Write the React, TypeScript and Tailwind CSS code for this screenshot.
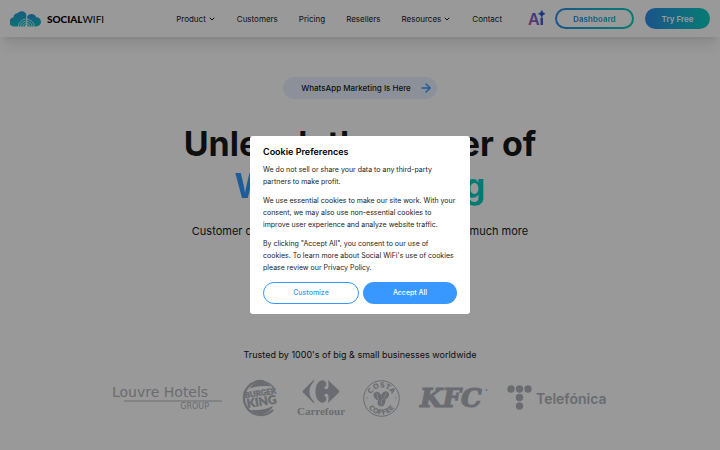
import React from "react";
import { ArrowRight, ChevronDown } from "lucide-react";

const LOGO = "#b1b5bc";

function SocialWifiLogo() {
  return (
    <a href="#" aria-label="Social WiFi" className="flex items-center gap-1.5">
      <svg width="31" height="17" viewBox="0 0 31 17" aria-hidden="true">
        <defs>
          <linearGradient id="cloud" x1="0" y1="0" x2="0.3" y2="1">
            <stop offset="0" stopColor="#2f8fd6" />
            <stop offset="1" stopColor="#12bfc4" />
          </linearGradient>
        </defs>
        <path
          d="M4.500 16.500A4.600 4.600 0 0 1 3.600 7.200A4.300 4.300 0 0 1 7.500 3.200A5.200 5.200 0 0 1 16.300 4.300L16.300 16.500Z"
          fill="url(#cloud)"
        />
        <path
          d="M17.300 16.500V6A5.200 5.200 0 0 1 26.300 7.300A4.600 4.600 0 0 1 26.500 16.500Z"
          fill="url(#cloud)"
        />
        <g fill="none" stroke="#ffffff" strokeWidth="0.7">
          <path d="M8.300 17a8 8 0 0 1 16 0" />
          <path d="M10.500 17a5.800 5.800 0 0 1 11.600 0" />
          <path d="M12.700 17a3.600 3.600 0 0 1 7.200 0" />
        </g>
        <circle cx="16.300" cy="16" r="1.200" fill="#ffffff" />
      </svg>
      <span className="font-['Lato',sans-serif] text-[10px] leading-4 text-black">
        <span className="font-black">SOCIAL</span>
        <span className="font-normal">WIFI</span>
      </span>
    </a>
  );
}

function AiMark() {
  return (
    <svg width="19" height="18" viewBox="0 0 19 18" role="img" aria-label="Ai" className="overflow-visible">
      <defs>
        <linearGradient id="ai" x1="0" y1="1" x2="1" y2="0">
          <stop offset="0" stopColor="#d9538f" />
          <stop offset="0.55" stopColor="#7d5fd0" />
          <stop offset="1" stopColor="#2459d6" />
        </linearGradient>
      </defs>
      <text x="1" y="15" fontFamily="Inter, sans-serif" fontSize="16" fontWeight="600" fill="url(#ai)">
        A
      </text>
      <rect x="13.500" y="7.500" width="2.500" height="7.500" rx="0.5" fill="#4a5cd0" />
      <path
        d="M14.800 0.500Q15.300 3 18 3.700Q15.300 4.400 14.800 7Q14.300 4.400 11.500 3.700Q14.300 3 14.800 0.500Z"
        fill="#1d56c9"
        stroke="#1d56c9"
        strokeWidth="0.6"
      />
    </svg>
  );
}

function LouvreHotels() {
  return (
    <svg width="111" height="28" viewBox="0 0 111 28" role="img" aria-label="Louvre Hotels Group">
      <g fill={LOGO} fontFamily="'DejaVu Sans', sans-serif">
        <text x="0" y="13" fontSize="14">Louvre Hotels</text>
        <text x="97" y="25" fontSize="8" textAnchor="end">GROUP</text>
      </g>
      <path d="M12 17h98" stroke={LOGO} strokeWidth="1" />
    </svg>
  );
}

function BurgerKing() {
  return (
    <svg width="37" height="38" viewBox="0 0 37 38" role="img" aria-label="Burger King">
      <path d="M8 9.500C11 1.500 23 0 29 7.500C22 6.500 14 7 8 9.500Z" fill={LOGO} />
      <path d="M9 31C15 31.500 24 30.500 31 27C27 36 15 38 9 31Z" fill={LOGO} />
      <path d="M22 2.300A17 17 0 1 0 31 31" fill="none" stroke={LOGO} strokeWidth="2.200" />
      <path d="M22 2.300A17 17 0 0 1 33 11" fill="none" stroke={LOGO} strokeWidth="1.200" />
      <g
        transform="rotate(-9 18 19)"
        fill={LOGO}
        stroke={LOGO}
        strokeWidth="0.4"
        fontFamily="'Lato', sans-serif"
        fontWeight="900"
        textAnchor="middle"
      >
        <text x="19" y="17" fontSize="8">BURGER</text>
        <text x="19" y="27" fontSize="12">KING</text>
      </g>
    </svg>
  );
}

function Carrefour() {
  return (
    <svg width="46" height="38" viewBox="0 0 46 38" role="img" aria-label="Carrefour" className="overflow-visible">
      <g fill={LOGO}>
        <path d="M15.500 1L5 11.500Q4.300 12.500 5 13.500L15.500 24C16.500 24 16.500 23 15.500 22C12 18 11.500 15 11.500 12.500S12 7 15.500 3C16.500 2 16.500 1 15.500 1Z" />
        <path d="M23 1.500C27 .5 29 4 28 6.500C27.500 8 26 8.500 26 8.500C27 10.500 29 10.500 30 9.500C31 8 30.500 4 30 1L41 11.500Q41.700 12.500 41 13.500L30 24C30.500 21 31 17 30 15.500C29 14.500 27 14.500 26 16.500C26 16.500 27.500 17 28 18.500C29 21 27 24.500 23 23.500C19.500 22 17.500 18 17.500 12.500S19.500 3 23 1.500Z" />
        <text x="23" y="36" textAnchor="middle" fontFamily="'Liberation Serif', serif" fontSize="11" fontWeight="700">
          Carrefour
        </text>
      </g>
    </svg>
  );
}

function CostaCoffee() {
  return (
    <svg width="37" height="37" viewBox="0 0 37 37" role="img" aria-label="Costa Coffee">
      <defs>
        <path id="costa-top" d="M7.500 18.500a11 11 0 0 1 22 0" />
        <path id="costa-bottom" d="M2.500 18.500a16 16 0 0 0 32 0" />
      </defs>
      <circle cx="18.500" cy="18.500" r="17.800" fill="none" stroke={LOGO} strokeWidth="1" />
      <g
        fill={LOGO}
        fontFamily="'DejaVu Sans', sans-serif"
        fontSize="7"
        fontWeight="700"
        textAnchor="middle"
      >
        <text><textPath href="#costa-top" startOffset="50%">COSTA</textPath></text>
        <text><textPath href="#costa-bottom" startOffset="50%">COFFEE</textPath></text>
      </g>
      <g fill={LOGO}>
        <ellipse cx="14.500" cy="16" rx="3.600" ry="4.600" transform="rotate(-38 14.500 16)" />
        <ellipse cx="22" cy="15.500" rx="3.600" ry="4.600" transform="rotate(35 22 15.500)" />
        <ellipse cx="18.500" cy="22" rx="3.700" ry="4.500" transform="rotate(20 18.500 22)" />
        <circle cx="4" cy="18" r="0.7" />
        <circle cx="33" cy="18" r="0.7" />
      </g>
      <g fill="none" stroke="#ffffff" strokeWidth="0.5">
        <path d="M12.500 12.500q3 2 2 4t2 3.500" />
        <path d="M24.500 12q-3 1.500-2.300 3.500t-2.200 4" />
        <path d="M20 18.500q-3 2-1.500 4t-1.500 4" />
      </g>
    </svg>
  );
}

function Kfc() {
  return (
    <svg width="69" height="22" viewBox="0 0 69 22" role="img" aria-label="KFC" className="overflow-visible">
      <text
        x="1"
        y="20"
        fontFamily="'DejaVu Serif', serif"
        fontSize="26"
        fontWeight="700"
        fontStyle="italic"
        fill={LOGO}
        stroke={LOGO}
        strokeWidth="1.200"
      >
        KFC
      </text>
      <circle cx="67.500" cy="3" r="0.9" fill={LOGO} />
    </svg>
  );
}

function Telefonica() {
  return (
    <svg width="101" height="26" viewBox="0 0 101 26" role="img" aria-label="Telefónica">
      <g fill={LOGO}>
        <circle cx="4" cy="4" r="3.700" />
        <circle cx="12.500" cy="4" r="3.700" />
        <circle cx="21" cy="4" r="3.700" />
        <circle cx="12.500" cy="12.500" r="3.700" />
        <circle cx="12.500" cy="21" r="3.700" />
        <text x="29" y="19" fontFamily="Inter, sans-serif" fontSize="14" fontWeight="600">
          Telefónica
        </text>
      </g>
    </svg>
  );
}

const NAV = [
  { label: "Product", menu: true },
  { label: "Customers", menu: false },
  { label: "Pricing", menu: false },
  { label: "Resellers", menu: false },
  { label: "Resources", menu: true },
  { label: "Contact", menu: false },
];

function Header() {
  return (
    <header className="flex h-[37px] items-center justify-between bg-white px-2.5 shadow-lg">
      <SocialWifiLogo />
      <div className="flex items-center">
        <nav aria-label="Main" className="mr-[25px] flex items-center gap-[21px] text-[8px] leading-3">
          {NAV.map((item) =>
            item.menu ? (
              <button key={item.label} type="button" className="flex items-center gap-0.5">
                {item.label}
                <ChevronDown size={8} strokeWidth={3} aria-hidden="true" />
              </button>
            ) : (
              <a key={item.label} href="#">
                {item.label}
              </a>
            ),
          )}
        </nav>
        <AiMark />
        <button
          type="button"
          className="ml-[9px] h-[21px] w-[79px] rounded-full bg-linear-to-r from-[#2e8be6] to-[#08cfc0] p-0.5 text-[8px] font-bold"
        >
          <span className="flex h-full items-center justify-center rounded-full bg-white">
            <span className="bg-linear-to-r from-[#2e93e0] to-[#1fbccb] bg-clip-text text-transparent">
              Dashboard
            </span>
          </span>
        </button>
        <button
          type="button"
          className="ml-[11px] h-[21px] w-[65px] rounded-full bg-linear-to-r from-[#2e8be6] to-[#08cfc0] text-[8px] font-semibold text-white"
        >
          Try Free
        </button>
      </div>
    </header>
  );
}

function Hero() {
  return (
    <section className="flex flex-col items-center pt-10 text-center">
      <a
        href="#"
        className="flex h-[22px] items-center gap-2 rounded-full bg-[#eaf2ff] pr-1 pl-[18px] text-[8px] font-medium"
      >
        WhatsApp Marketing Is Here
        <ArrowRight size={14} strokeWidth={2.5} className="text-[#3398ff]" aria-hidden="true" />
      </a>
      <h1 className="mt-6 text-[34px] leading-[42px] font-bold text-[#17181a]">
        Unleash the power of
        <span className="mx-auto block w-fit bg-linear-to-r from-[#3398ff] to-[#00cfc0] bg-clip-text text-transparent">
          WiFi Marketing
        </span>
      </h1>
      <p className="mt-4 text-[11px] leading-4">
        Customer data collection, marketing automation, and much more
      </p>
    </section>
  );
}

function TrustedBy() {
  return (
    <section className="mt-[110px] flex flex-col items-center gap-[18px] pb-8">
      <p className="text-[9px] leading-3">Trusted by 1000's of big &amp; small businesses worldwide</p>
      <div className="flex items-center gap-[19px]">
        <LouvreHotels />
        <BurgerKing />
        <Carrefour />
        <CostaCoffee />
        <Kfc />
        <Telefonica />
      </div>
    </section>
  );
}

function CookieDialog() {
  return (
    <div className="fixed inset-0 flex items-center justify-center bg-black/40">
      <div
        role="dialog"
        aria-modal="true"
        aria-labelledby="cookie-title"
        className="w-[220px] rounded-[3px] bg-white px-[13px] py-2.5 text-[7px] leading-3 text-[#222222]"
      >
        <h2 id="cookie-title" className="text-[9px] font-semibold text-black">
          Cookie Preferences
        </h2>
        <div className="mt-1.5 flex flex-col gap-[7px]">
          <p>We do not sell or share your data to any third-party partners to make profit.</p>
          <p>
            We use essential cookies to make our site work. With your consent, we may also use
            non-essential cookies to improve user experience and analyze website traffic.
          </p>
          <p>
            By clicking "Accept All", you consent to our use of cookies. To learn more about Social
            WiFi's use of cookies please review our Privacy Policy.
          </p>
        </div>
        <div className="mt-2 flex gap-1">
          <button
            type="button"
            className="h-[22px] flex-1 rounded-full border border-[#3398ff] font-medium text-[#3398ff]"
          >
            Customize
          </button>
          <button type="button" className="h-[22px] flex-1 rounded-full bg-[#3898ff] font-medium text-white">
            Accept All
          </button>
        </div>
      </div>
    </div>
  );
}

export default function App() {
  return (
    <div className="min-h-screen bg-white font-['Inter',sans-serif] text-[#17181a]">
      <Header />
      <main>
        <Hero />
        <TrustedBy />
      </main>
      <CookieDialog />
    </div>
  );
}
